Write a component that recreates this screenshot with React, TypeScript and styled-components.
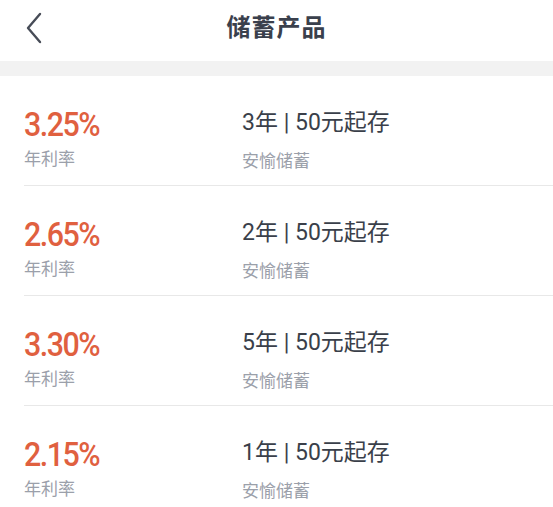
import React from 'react';
import styled, { createGlobalStyle } from 'styled-components';

const GlobalStyle = createGlobalStyle`
    html, body {
        margin: 0;
        padding: 0;
        background: #fff;
    }
    body {
        font-family: Roboto, "Noto Sans CJK SC", sans-serif;
    }
`;

const Page = styled.div`
    width: 553px;
    min-height: 507px;
    background: #fff;
    overflow: hidden;
`;

const Header = styled.header`
    position: relative;
    height: 61px;
    display: flex;
    justify-content: center;
    padding-top: 8px;
    box-sizing: border-box;
`;

const BackButton = styled.button`
    position: absolute;
    left: 22px;
    top: 11px;
    width: 24px;
    height: 34px;
    padding: 0;
    border: 0;
    background: transparent;
    display: flex;
    align-items: center;
    justify-content: center;
    cursor: pointer;
`;

const Title = styled.h1`
    margin: 0;
    font-family: "Noto Sans CJK SC", sans-serif;
    font-size: 24px;
    line-height: 36px;
    font-weight: 700;
    color: #3a404c;
    letter-spacing: 1px;
`;

const Band = styled.div`
    height: 15px;
    background: #f2f2f2;
`;

const List = styled.ul`
    margin: 0;
    padding: 0 0 0 24px;
    list-style: none;
`;

const Row = styled.li`
    height: 110px;
    box-sizing: border-box;
    padding-top: 31px;
    display: flex;
    align-items: flex-start;
    border-bottom: 1px solid #e8e8e8;
    &:last-child {
        border-bottom: 0;
    }
`;

const RateCol = styled.div`
    width: 218px;
    display: flex;
    flex-direction: column;
`;

const Rate = styled.div`
    font-family: Roboto, sans-serif;
    font-size: 33px;
    line-height: 36px;
    font-weight: 500;
    color: #e0603f;
    letter-spacing: -1.6px;
    transform: scaleX(0.92);
    transform-origin: left center;
`;

const Caption = styled.div<{ $offset?: number }>`
    margin-top: ${(p) => p.$offset ?? 4}px;
    font-family: "Noto Sans CJK SC", sans-serif;
    font-size: 17px;
    line-height: 22px;
    color: #9ba0aa;
`;

const InfoCol = styled.div`
    display: flex;
    flex-direction: column;
`;

const Terms = styled.div`
    font-family: Roboto, "Noto Sans CJK SC", sans-serif;
    font-size: 23px;
    line-height: 32px;
    color: #3a3f4a;
`;

const products = [
    { rate: '3.25%', years: 3 },
    { rate: '2.65%', years: 2 },
    { rate: '3.30%', years: 5 },
    { rate: '2.15%', years: 1 },
];

const ChevronLeft = () => (
    <svg width="18" height="32" viewBox="0 0 18 32" fill="none">
        <path d="M15 2 L3 16 L15 30" stroke="#474c57" strokeWidth="2.4" strokeLinecap="round" strokeLinejoin="round" />
    </svg>
);

const App = () => {
    return (
        <Page>
            <GlobalStyle />
            <Header>
                <BackButton aria-label="返回">
                    <ChevronLeft />
                </BackButton>
                <Title>储蓄产品</Title>
            </Header>
            <Band />
            <List>
                {products.map((p) => (
                    <Row key={p.rate}>
                        <RateCol>
                            <Rate>{p.rate}</Rate>
                            <Caption>年利率</Caption>
                        </RateCol>
                        <InfoCol>
                            <Terms>{p.years}年 | 50元起存</Terms>
                            <Caption $offset={10}>安愉储蓄</Caption>
                        </InfoCol>
                    </Row>
                ))}
            </List>
        </Page>
    );
};

export default App;
